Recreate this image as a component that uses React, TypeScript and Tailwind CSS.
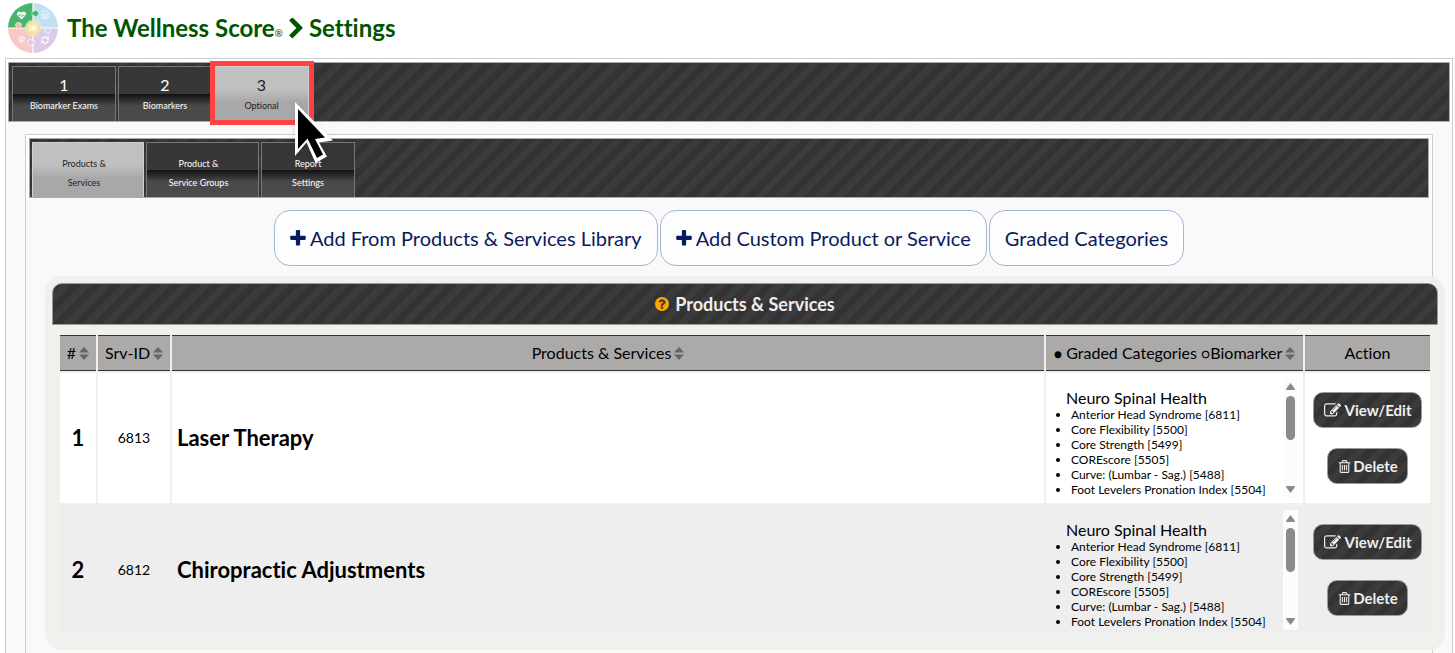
import type { ReactNode } from 'react'
import clsx from 'clsx'
import { FaAt, FaCalculator, FaGraduationCap, FaHeartbeat, FaSyncAlt } from 'react-icons/fa'

const STRIPES =
  'bg-[repeating-linear-gradient(135deg,#333333_0px,#333333_7px,#3b3b3b_7px,#3b3b3b_14px)]'

// Font Awesome 4 glyphs, all on a 1792 grid.
const ICONS = {
  plus: 'M1600 736v192q0 40-28 68t-68 28h-416v416q0 40-28 68t-68 28h-192q-40 0-68-28t-28-68v-416h-416q-40 0-68-28t-28-68v-192q0-40 28-68t68-28h416v-416q0-40 28-68t68-28h192q40 0 68 28t28 68v416h416q40 0 68 28t28 68z',
  chevron:
    'M1363 877l-742 742q-19 19-45 19t-45-19l-166-166q-19-19-19-45t19-45l531-531-531-531q-19-19-19-45t19-45l166-166q19-19 45-19t45 19l742 742q19 19 19 45t-19 45z',
  question:
    'M1024 1376v-192q0-14-9-23t-23-9h-192q-14 0-23 9t-9 23v192q0 14 9 23t23 9h192q14 0 23-9t9-23zm256-672q0-88-55.5-163t-138.5-116-170-41q-243 0-371 213-15 24 8 42l132 100q7 6 19 6 16 0 25-12 53-68 86-92 34-24 86-24 48 0 85.5 26t37.5 59q0 38-20 61t-68 45q-63 28-115.5 86.5t-52.5 125.5v36q0 14 9 23t23 9h192q14 0 23-9t9-23q0-19 21.5-49.5t54.5-49.5q32-18 49-28.5t46-35 44.5-48 28-60.5 12.5-81zm384 192q0 209-103 385.5t-279.5 279.5-385.5 103-385.5-103-279.5-279.5-103-385.5 103-385.5 279.5-279.5 385.5-103 385.5 103 279.5 279.5 103 385.5z',
  edit: 'M888 1184l116-116-152-152-116 116v56h96v96h56zm440-720q-16-16-33 1l-350 350q-17 17-1 33t33-1l350-350q17-17 1-33zm80 594v190q0 119-84.5 203.5t-203.5 84.5h-832q-119 0-203.5-84.5t-84.5-203.5v-832q0-119 84.5-203.5t203.5-84.5h832q63 0 117 25 15 7 18 23 3 17-9 29l-49 49q-14 14-32 8-23-6-45-6h-832q-66 0-113 47t-47 113v832q0 66 47 113t113 47h832q66 0 113-47t47-113v-126q0-13 9-22l64-64q15-15 35-7t20 29zm-96-738l288 288-672 672h-288v-288zm444 132l-92 92-288-288 92-92q28-28 68-28t68 28l152 152q28 28 28 68t-28 68z',
  trash:
    'M704 736v576q0 14-9 23t-23 9h-64q-14 0-23-9t-9-23v-576q0-14 9-23t23-9h64q14 0 23 9t9 23zm256 0v576q0 14-9 23t-23 9h-64q-14 0-23-9t-9-23v-576q0-14 9-23t23-9h64q14 0 23 9t9 23zm256 0v576q0 14-9 23t-23 9h-64q-14 0-23-9t-9-23v-576q0-14 9-23t23-9h64q14 0 23 9t9 23zm128 724v-948h-896v948q0 22 7 40.5t14.5 27 10.5 8.5h832q3 0 10.5-8.5t14.5-27 7-40.5zm-672-1076h448l-48-117q-7-9-17-11h-317q-10 2-17 11zm928 32v64q0 14-9 23t-23 9h-96v948q0 83-47 143.5t-113 60.5h-832q-66 0-113-58.5t-47-141.5v-952h-96q-14 0-23-9t-9-23v-64q0-14 9-23t23-9h309l70-167q15-37 54-63t79-26h320q40 0 79 26t54 63l70 167h309q14 0 23 9t9 23z',
}

function Icon({
  name,
  className,
  viewBox = '0 0 1792 1792',
}: {
  name: keyof typeof ICONS
  className: string
  viewBox?: string
}) {
  return (
    <svg viewBox={viewBox} fill="currentColor" aria-hidden="true" className={clsx('shrink-0', className)}>
      <path d={ICONS[name]} />
    </svg>
  )
}

function Logo() {
  return (
    <svg viewBox="0 0 50 50" className="size-[50px] shrink-0" aria-hidden="true">
      <path d="M25 25H50A25 25 0 0 0 25 0Z" fill="#c3dff2" />
      <path d="M25 25V50A25 25 0 0 0 50 25Z" fill="#dccbe6" />
      <path d="M25 25H0A25 25 0 0 0 25 50Z" fill="#f9c8c6" />
      <path d="M25 25V0A25 25 0 0 0 0 25Z" fill="#45b66c" />
      <path d="M25 0V50M0 25H50" stroke="#fff" strokeWidth="1.2" />
      <g stroke="#fff" strokeWidth="0.7">
        <path d="M24 8.600H26C26.500 7 30.500 7 30.500 10.500S26.500 14 26 12.400H24Z" fill="#45b66c" stroke="#d5efe0" />
        <path d="M37.600 24V26C36 26.500 36 30.500 39.500 30.500S43 26.500 41.400 26V24Z" fill="#c3dff2" />
        <path d="M26 37.600H24C23.500 36 19.500 36 19.500 39.500S23.500 43 24 41.400H26Z" fill="#dccbe6" />
        <path d="M8.600 26V24C7 23.500 7 19.500 10.500 19.500S14 23.500 12.400 24V26Z" fill="#f9b5b1" />
      </g>
      <circle cx="25" cy="25" r="8.500" fill="#fff" fillOpacity="0.35" />
      <circle cx="25" cy="25" r="7.500" fill="#f7dc8f" />
      <circle cx="25" cy="25" r="6" fill="#f9e6ad" />
      <FaHeartbeat x="9" y="8" size={9} color="#fff" />
      <FaCalculator x="33" y="8" size={8} color="#e6f2fa" />
      <FaAt x="10" y="33" size={7} color="#fdecec" />
      <FaSyncAlt x="33" y="33" size={8} color="#fff" />
      <FaGraduationCap x="21" y="21" size={8} color="#fffdf5" />
    </svg>
  )
}

function Tab({ active, className, children }: { active?: boolean; className: string; children: ReactNode }) {
  return (
    <button
      type="button"
      role="tab"
      aria-selected={!!active}
      className={clsx(
        'flex h-[55px] flex-col items-center border border-b-0 text-[9px] whitespace-nowrap',
        active
          ? 'border-[#d0d0d0] bg-[linear-gradient(#c0c0c0_40%,#a8a8a8_65%)] text-[#222]'
          : 'border-[#777] bg-[linear-gradient(#373737_50%,#111_50%,#4a4a4a_72%)] text-white',
        className,
      )}
    >
      {children}
    </button>
  )
}

function StepTab({ step, label, active, className }: { step: number; label: string; active?: boolean; className: string }) {
  return (
    <Tab active={active} className={clsx('pt-[7px]', className)}>
      <span className="text-base leading-[22px]">{step}</span>
      <span className="leading-5">{label}</span>
    </Tab>
  )
}

function SubTab({ lines, active, className }: { lines: string[]; active?: boolean; className: string }) {
  return (
    <Tab active={active} className={clsx('pt-[11px] leading-[19px]', className)}>
      {lines.map((line) => (
        <span key={line}>{line}</span>
      ))}
    </Tab>
  )
}

function PillButton({ icon, children }: { icon?: boolean; children: ReactNode }) {
  return (
    <button
      type="button"
      className="flex h-14 items-center gap-1 rounded-2xl border border-[#a3b7d3] bg-[#fdfdfd] px-[15px] text-xl text-[#0a1a5e]"
    >
      {icon && <Icon name="plus" viewBox="192 128 1408 1536" className="h-[17px] w-4" />}
      {children}
    </button>
  )
}

function DarkButton({ icon, children }: { icon: 'edit' | 'trash'; children: ReactNode }) {
  return (
    <button
      type="button"
      className={clsx(
        'flex h-9 items-center rounded-[10px] border border-[#999] text-[15px] font-bold text-[#eee]',
        icon === 'edit' ? 'gap-1 px-[10px]' : 'gap-px px-[9px]',
        STRIPES,
      )}
    >
      <Icon name={icon} className={icon === 'edit' ? 'size-[17px]' : 'size-[15px]'} />
      {children}
    </button>
  )
}

function SortArrows() {
  return (
    <svg viewBox="0 0 10 13" className="h-[13px] w-[10px] shrink-0" fill="#666" aria-hidden="true">
      <path d="M0 5.500 5 0l5 5.500ZM0 7.500 5 13l5-5.500Z" />
    </svg>
  )
}

function HeaderCell({ className, sortable, children }: { className?: string; sortable?: boolean; children: ReactNode }) {
  return (
    <th scope="col" className={clsx('h-9 border-y border-[#333] bg-[#acaaa8] p-0 font-normal', className)}>
      <div className="flex items-center justify-center gap-[3px] whitespace-nowrap">
        {children}
        {sortable && <SortArrows />}
      </div>
    </th>
  )
}

function ScrollTrack() {
  return (
    <div className="flex w-[15px] shrink-0 flex-col items-center bg-[#fcfcfc] py-[5px]" aria-hidden="true">
      <svg viewBox="0 0 9 7" className="h-[7px] w-[9px]" fill="#8b8b8b">
        <path d="M4.500 0 9 6Q9 7 8 7H1Q0 7 0 6Z" />
      </svg>
      <div className="mt-[6px] h-11 w-[9px] rounded-full bg-[#8b8b8b]" />
      <svg viewBox="0 0 9 7" className="mt-auto h-[7px] w-[9px]" fill="#8b8b8b">
        <path d="M4.500 7 9 1Q9 0 8 0H1Q0 0 0 1Z" />
      </svg>
    </div>
  )
}

const BIOMARKERS = [
  'Anterior Head Syndrome [6811]',
  'Core Flexibility [5500]',
  'Core Strength [5499]',
  'COREscore [5505]',
  'Curve: (Lumbar - Sag.) [5488]',
  'Foot Levelers Pronation Index [5504]',
]

const SERVICES = [
  { id: '6813', name: 'Laser Therapy' },
  { id: '6812', name: 'Chiropractic Adjustments' },
]

function ServiceRow({ index, id, name }: { index: number; id: string; name: string }) {
  return (
    <tr className={index % 2 === 0 ? 'bg-[#eeeeee]' : 'bg-white'}>
      <td className="h-[130px] p-0 pb-[2px] text-center text-[22px] font-bold">{index}</td>
      <td className="p-0 text-center text-sm">{id}</td>
      <td className="p-0 pb-[2px] pl-[5px] text-[22px] font-bold">{name}</td>
      <td className="p-0 pr-[5px]">
        <div className="flex h-[120px] overflow-hidden">
          <div className="flex-1 whitespace-nowrap pt-[10px]">
            <div className="pl-5 leading-[19px]">Neuro Spinal Health</div>
            <ul className="list-disc pl-[25px] text-xs leading-[15px]">
              {BIOMARKERS.map((b) => (
                <li key={b}>{b}</li>
              ))}
            </ul>
          </div>
          <ScrollTrack />
        </div>
      </td>
      <td className="p-0">
        <div className="flex flex-col items-center gap-5">
          <DarkButton icon="edit">View/Edit</DarkButton>
          <DarkButton icon="trash">Delete</DarkButton>
        </div>
      </td>
    </tr>
  )
}

function ServicesPanel() {
  return (
    <section className="mt-[10px] -mr-[13px] ml-[19px] rounded-2xl bg-[#f0f1ec] px-[7px] pt-[7px] pb-[13px]">
      <h2
        className={clsx(
          'flex h-[42px] items-center justify-center gap-[6px] rounded-t-[10px] border border-[#999] pb-px text-lg font-bold text-[#eee]',
          STRIPES,
        )}
      >
        <Icon name="question" viewBox="128 128 1536 1536" className="size-[14px] text-[#ffa500]" />
        Products &amp; Services
      </h2>
      <div className="px-[6px] pt-2">
        <table className="w-full table-fixed border-separate border-spacing-[2px]">
          <thead>
            <tr>
              <HeaderCell sortable className="w-9">
                #
              </HeaderCell>
              <HeaderCell sortable className="w-[72px]">
                Srv-ID
              </HeaderCell>
              <HeaderCell sortable>Products &amp; Services</HeaderCell>
              <HeaderCell sortable className="w-[257px]">
                <span>
                  <span className="text-sm">●</span> Graded Categories <span className="text-sm">○</span>Biomarker
                </span>
              </HeaderCell>
              <HeaderCell className="w-[125px]">Action</HeaderCell>
            </tr>
          </thead>
          <tbody>
            {SERVICES.map((s, i) => (
              <ServiceRow key={s.id} index={i + 1} id={s.id} name={s.name} />
            ))}
          </tbody>
        </table>
      </div>
    </section>
  )
}

function Pointer() {
  return (
    <svg
      viewBox="0 0 44 66"
      className="pointer-events-none absolute top-[41px] left-[287px] z-10 h-[66px] w-11 drop-shadow-md"
      aria-hidden="true"
    >
      <path d="M2 2V56L13.500 42.500 22.500 63 34 56.500 26 42.500 40 40.500Z" fill="#fff" />
      <path d="M5 9V49L14.500 38.500 24 58 30 54.500 22 39 32 37.500Z" fill="#000" />
    </svg>
  )
}

export default function App() {
  return (
    <div className="flex min-h-screen flex-col bg-white pr-[2px] pl-[5px] font-['Lato',sans-serif] text-black [font-variant-ligatures:none]">
      <header className="flex h-[58px] items-center gap-[9px] pb-[2px] pl-[3px]">
        <Logo />
        <h1 className="flex items-center text-2xl font-bold text-[#005500]">
          The Wellness Score
          <span className="mt-3 text-[10px] text-[#7a6a00]">®</span>
          <Icon name="chevron" viewBox="320 100 1088 1560" className="mx-[6px] h-[21px] w-[14px]" />
          Settings
        </h1>
      </header>

      <main className="flex flex-1 flex-col border border-b-0 border-[#ccc] bg-[#f9f9f9]">
        <div className="relative bg-white px-[2px] pt-[3px]">
          <div role="tablist" className={clsx('flex h-[60px] gap-[2px] border border-[#aaa] pt-[3px] pl-[3px]', STRIPES)}>
            <StepTab step={1} label="Biomarker Exams" className="w-[104px]" />
            <StepTab step={2} label="Biomarkers" className="w-[94px]" />
            <StepTab step={3} label="Optional" active className="w-[95px]" />
          </div>
          {/* call-out around the open step */}
          <div className="pointer-events-none absolute top-[2px] left-[204px] h-16 w-[104px] border-[5px] border-[#ff4343]" />
          <Pointer />
        </div>

        <div className="mt-3 mr-[19px] ml-[19px] flex flex-1 flex-col border border-b-0 border-[#ccc]">
          <div className="bg-white px-[3px] pt-[3px]">
            <div role="tablist" className={clsx('flex h-[60px] gap-[2px] border border-[#aaa] pt-[3px] pl-[2px]', STRIPES)}>
              <SubTab lines={['Products &', 'Services']} active className="w-28 pr-2" />
              <SubTab lines={['Product &', 'Service Groups']} className="w-[113px] pr-2" />
              <SubTab lines={['Report', 'Settings']} className="w-[94px]" />
            </div>
          </div>

          <div className="mt-3 flex justify-center gap-[2px]">
            <PillButton icon>Add From Products &amp; Services Library</PillButton>
            <PillButton icon>Add Custom Product or Service</PillButton>
            <PillButton>Graded Categories</PillButton>
          </div>

          <ServicesPanel />
        </div>
      </main>
    </div>
  )
}
